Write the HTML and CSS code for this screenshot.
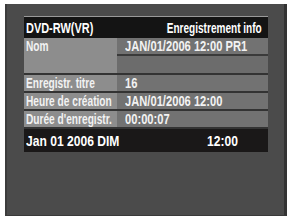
FILE: index.html
```html
<!DOCTYPE html>
<html lang="fr">

<head>
    <meta charset="UTF-8">
    <meta name="viewport" content="width=device-width, initial-scale=1.0">
    <title>Enregistrement info</title>
    <link rel="stylesheet" href="styles.css">
</head>

<body>
    <!-- ecran du lecteur DVD -->
    <div class="screen">
        <div class="info">
            <div class="head">
                <span class="t">DVD-RW(VR)</span>
                <span class="t t-right">Enregistrement info</span>
            </div>

            <div class="row row-name">
                <div class="label"><span class="t">Nom</span></div>
                <div class="value">
                    <div class="line"><span class="t">JAN/01/2006 12:00 PR1</span></div>
                    <div class="line"></div>
                </div>
            </div>
            <div class="row">
                <div class="label"><span class="t">Enregistr. titre</span></div>
                <div class="value"><span class="t">16</span></div>
            </div>
            <div class="row">
                <div class="label"><span class="t">Heure de création</span></div>
                <div class="value"><span class="t">JAN/01/2006 12:00</span></div>
            </div>
            <div class="row">
                <div class="label"><span class="t">Durée d'enregistr.</span></div>
                <div class="value"><span class="t">00:00:07</span></div>
            </div>

            <div class="foot">
                <div class="date"><span class="t">Jan 01 2006 DIM</span></div>
                <span class="t">12:00</span>
            </div>
        </div>
    </div>
</body>

</html>
```

FILE: styles.css
```css
* {
    box-sizing: border-box;
}

body {
    margin: 0;
    background-color: #fff;
    font-family: "Liberation Sans", Arial, sans-serif;
    font-weight: bold;
}

/* the OSD font is a condensed one, so squeeze the glyphs */
.t {
    display: inline-block;
    white-space: nowrap;
    transform: scaleX(0.7);
    transform-origin: left center;
}

.screen {
    margin: 4px 0 0 5px;
    width: 282px;
    height: 212px;
    padding: 12px 0 0 19px;
    background-color: #4b4b4b;
    border-left: 2px solid #3c3c3c;
    border-right: 3px solid #333;
    border-bottom: 1px solid #3a3a3a;
}

.info {
    width: 244px;
    margin-left: -2px;
}

.head {
    display: flex;
    justify-content: space-between;
    align-items: center;
    height: 22px;
    padding: 0 6px 0 2px;
    border-top: 1px solid #9a9a9a;
    background-color: #141414;
    color: #fff;
    font-size: 15px;
}

.head .t {
    transform: scaleX(0.73);
}

.head .t-right {
    transform: scaleX(0.67);
    transform-origin: right center;
}

.row {
    display: flex;
    height: 18px;
    border-bottom: 2px solid #333;
    font-size: 14.5px;
    color: #f2f2f2;
}

.row .label {
    flex-shrink: 0;
    width: 93px;
    padding: 0 0 0 2px;
    background-color: #8d8d8d;
    line-height: 16px;
    white-space: nowrap;
}

.row .value {
    flex: 1;
    min-width: 0;
    padding-left: 8px;
    background-color: #727272;
    line-height: 16px;
    white-space: nowrap;
}

.row .value .t {
    transform: scaleX(0.77);
}

.row-name {
    height: 37px;
}

.row-name .value {
    padding: 0;
}

.row-name .line {
    height: 18px;
    padding-left: 8px;
    line-height: 17px;
}

.row-name .line:first-child {
    border-bottom: 2px solid #3a3a3a;
}

.row-name .line:last-child {
    height: 17px;
    background-color: #6c6c6c;
}

.foot {
    display: flex;
    align-items: center;
    height: 23px;
    padding-left: 2px;
    background-color: #1a1818;
    color: #fff;
    font-size: 15.5px;
}

.foot .t {
    transform: scaleX(0.78);
}

.foot .date {
    flex-shrink: 0;
    width: 181px;
}
```
